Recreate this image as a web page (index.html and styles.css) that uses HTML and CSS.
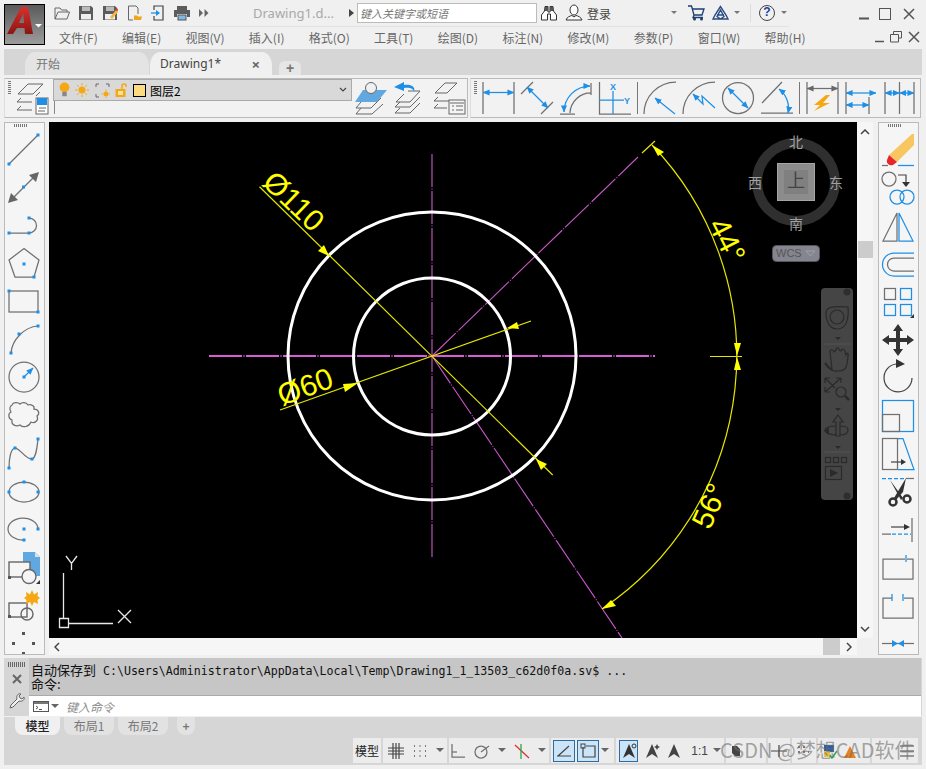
FILE: index.html
```html
<!DOCTYPE html>
<html lang="zh">
<head>
<meta charset="utf-8">
<title>AutoCAD</title>
<link rel="stylesheet" href="styles.css">
</head>
<body>
<svg class="defs" width="0" height="0">
  <defs>
    <marker id="ab" viewBox="0 0 8 8" refX="7.5" refY="4" markerWidth="7" markerHeight="7" markerUnits="userSpaceOnUse" orient="auto-start-reverse"><path d="M0 .5L8 4L0 7.5Z" fill="#1e8fe6"/></marker>
    <marker id="ag" viewBox="0 0 8 8" refX="7.5" refY="4" markerWidth="7" markerHeight="7" markerUnits="userSpaceOnUse" orient="auto-start-reverse"><path d="M0 .5L8 4L0 7.5Z" fill="#666"/></marker>
    <linearGradient id="logo" x1="0" y1="0" x2="0" y2="1"><stop offset="0" stop-color="#d9302c"/><stop offset="1" stop-color="#8c1512"/></linearGradient>
  </defs>
</svg>

<header class="titlebar">
  <div class="appbtn">
    <svg width="38" height="38" viewBox="0 0 38 38"><path d="M1 28L15 1H22L27 28H19L18.500 22H11L7 28ZM13 17H18L17.300 7Z" fill="url(#logo)" fill-rule="evenodd"/><path d="M29 18H36L32.500 21.500Z" fill="#fff"/></svg>
  </div>
  <div class="titlecol">
    <div class="row1">
      <div class="qat">
        <svg class="q" viewBox="0 0 16 16"><path class="gs1" d="M1 14V3H6L7.500 5H13V7M1 14L4 7H15.500L13 14Z"/></svg>
        <svg class="q" viewBox="0 0 16 16"><path class="gf" d="M1 1H13L15 3V15H1Z"/><rect x="4" y="1.500" width="8" height="4.500" fill="#bbb"/><rect x="3" y="9" width="10" height="5.500" fill="#f0f0f0"/></svg>
        <svg class="q" viewBox="0 0 16 16"><path class="gf" d="M1 1H13L15 3V15H1Z"/><rect x="4" y="1.500" width="8" height="4.500" fill="#bbb"/><rect x="3" y="9" width="10" height="5.500" fill="#f0f0f0"/><path d="M8 12L14 5L16 7L10 14Z" fill="#f5b342"/><path d="M13.500 5L15 3L16 4.500L15.500 6.500Z" fill="#e33"/></svg>
        <svg class="q" viewBox="0 0 16 16"><path class="gs1" d="M2.500 15V1H10L12 3V9M2.500 15H7"/><path d="M8 15V10.500H11L12 11.500H16L15 15Z" fill="#f0a31e"/></svg>
        <svg class="q" viewBox="0 0 16 16"><path class="ds" d="M4 5V1H13V15H4V11"/><path d="M1 8H7" class="bs"/><path d="M6 5L10 8L6 11Z" fill="#1e8fe6"/></svg>
        <svg class="q" viewBox="0 0 16 16"><path class="gf" d="M3 1H13V5H3ZM0 5H16V12H13V9H3V12H0Z"/><rect x="4" y="10" width="8" height="5" fill="#7fb9e6" stroke="#555"/></svg>
        <svg class="dbl" viewBox="0 0 10 10"><path d="M0 1L4 5L0 9ZM5.500 1L9.500 5L5.500 9Z" fill="#666"/></svg>
      </div>
      <span class="doctitle">Drawing1.d...</span>
      <svg class="tri" viewBox="0 0 6 10"><path d="M0 1L5 5L0 9Z" fill="#444"/></svg>
      <div class="search">键入关键字或短语</div>
      <svg class="icon-bin" viewBox="0 0 16 16"><path d="M4 1.500H7V7H9V1.500H12L12.500 6L15.500 10V15H9.500V9H6.500V15H.5V10L3.500 6Z" fill="#fff" stroke="#333"/><rect x="4" y="2" width="3" height="4" fill="#555"/><rect x="9" y="2" width="3" height="4" fill="#555"/></svg>
      <svg class="icon-user" viewBox="0 0 18 18"><ellipse cx="9" cy="6" rx="4" ry="5" fill="#fff" stroke="#333"/><path d="M1 16C2 13 5 12 7 11.500L9 13L11 11.500C13 12 16 13 17 16Z" fill="#fff" stroke="#333"/></svg>
      <span class="login">登录</span>
      <svg class="car c-login" viewBox="0 0 6 4"><path d="M0 0H6L3 3Z" fill="#777"/></svg>
      <svg class="icon-cart" viewBox="0 0 17 16"><path d="M0 1H3.500L6 10H14L16 4H4.500M6 10L5 12.500H15" fill="none" stroke="#1d3f70" stroke-width="1.300"/><circle cx="6.500" cy="14" r="1.500" fill="#1d3f70"/><circle cx="13.500" cy="14" r="1.500" fill="#1d3f70"/></svg>
      <svg class="icon-a360" viewBox="0 0 17 16"><path d="M8.500 1.500L3 10L1 14H16L14 10ZM5 10H12M8.500 5L5 11.500L8.500 14L12 11.500Z" fill="none" stroke="#2a4a83" stroke-width="1.400"/></svg>
      <svg class="car c-a" viewBox="0 0 6 4"><path d="M0 0H6L3 3Z" fill="#777"/></svg>
      <span class="vsep"></span>
      <span class="help">?</span>
      <svg class="car c-h" viewBox="0 0 6 4"><path d="M0 0H6L3 3Z" fill="#777"/></svg>
      <div class="winctl">
        <svg class="w-min" viewBox="0 0 12 12"><path d="M1 10.500H11" stroke="#555" stroke-width="2"/></svg>
        <svg class="w-max" viewBox="0 0 12 12"><rect x=".5" y=".5" width="11" height="11" fill="none" stroke="#555"/></svg>
        <svg class="w-cls" viewBox="0 0 12 12"><path d="M1 1L11 11M11 1L1 11" stroke="#555" stroke-width="1.500"/></svg>
      </div>
    </div>
    <div class="row2">
      <nav class="menu">
        <span>文件(F)</span><span>编辑(E)</span><span>视图(V)</span><span>插入(I)</span><span>格式(O)</span><span>工具(T)</span><span>绘图(D)</span><span>标注(N)</span><span>修改(M)</span><span>参数(P)</span><span>窗口(W)</span><span>帮助(H)</span>
      </nav>
      <div class="docctl">
        <svg viewBox="0 0 12 12"><path d="M3 10.500H12" stroke="#555" stroke-width="1.500"/></svg>
        <svg viewBox="0 0 12 12"><path d="M3.500 3V.5H11.500V7H9M.5 3.500H8.500V11H.5Z" fill="none" stroke="#555"/></svg>
        <svg viewBox="0 0 12 12"><path d="M1 1L11 11M11 1L1 11" stroke="#555" stroke-width="1.500"/></svg>
      </div>
    </div>
  </div>
</header>

<div class="tabstrip">
  <div class="tab tab-start"><span>开始</span></div>
  <div class="tab tab-active"><span>Drawing1*</span><b>×</b></div>
  <div class="tab tab-plus">+</div>
</div>

<section class="topbars">
  <div class="panel p1">
    <i class="grip-v"></i>
    <svg class="i first" viewBox="0 0 32 32"><path class="gs1" d="M2 12L12 2H27L17 12ZM5 16L1 20H16M5 24L1 28H16"/><path class="gs1" d="M20 14L24 10"/><rect x="20" y="16" width="12" height="16" fill="#fff" stroke="#666"/><rect x="21" y="16" width="10" height="7" fill="#1e8fe6"/><path d="M23 26H30M22 29H29" stroke="#666"/></svg>
    <div class="layerbox">
      <div class="combo">
        <svg class="li" viewBox="0 0 12 18"><circle cx="6" cy="6" r="5.500" fill="#f5a814"/><rect x="3.500" y="11" width="5" height="5" fill="#888"/></svg>
        <svg class="li2" viewBox="0 0 14 14"><circle cx="7" cy="7" r="3.500" fill="#f5a814"/><path d="M7 0V2.500M7 11.500V14M0 7H2.500M11.500 7H14M2 2L3.800 3.800M10.200 10.200L12 12M2 12L3.800 10.200M10.200 3.800L12 2" stroke="#f5a814"/></svg>
        <svg class="li3" viewBox="0 0 15 15"><path d="M1 4V1H4M11 1H14V4M1 11V14H4" fill="none" stroke="#666"/><circle cx="11" cy="11" r="2.500" fill="#f5a814"/><path d="M11 6.500V8M11 14V15.500M6.500 11H8M14 11H15.500" stroke="#f5a814"/></svg>
        <svg class="li4" viewBox="0 0 12 14"><rect x=".5" y="6" width="10" height="8" fill="#f5a814"/><rect x="3" y="8" width="5" height="4" fill="#fde1a0"/><path d="M7 6V2.500C7 .5 11 .5 11 2.500V4" fill="none" stroke="#f5a814" stroke-width="1.500"/></svg>
        <span class="swatch"></span>
        <span class="layername">图层2</span>
        <svg class="chev" viewBox="0 0 8 6"><path d="M1 1L4 4L7 1" fill="none" stroke="#444" stroke-width="1.200"/></svg>
      </div>
      <div class="belowcombo"></div>
    </div>
    <svg class="i" viewBox="0 0 32 32"><path class="gs1" d="M6 20L1 26H16L26 16M6 26L1 32H17L28 22"/><path d="M0 20L8 8H32L22 20Z" fill="#62a8e0"/><circle cx="16" cy="6" r="5.500" fill="#f0f0f0" stroke="#666"/></svg>
    <svg class="i" viewBox="0 0 32 32"><path class="gs1" d="M14 9H26L16 20H2L10 12M6 20L1 25H16L26 15M6 26L1 31H16L26 21"/><path d="M20 10C20 6 14 5 10 6V9L0 5L10 0V3C16 2 22 4 20 10Z" fill="#1e8fe6"/></svg>
    <svg class="i" viewBox="0 0 32 32"><path class="gs1" d="M2 11L12 1H24L14 11ZM5 15L1 19H16M5 22L1 26H14"/><rect x="16" y="18" width="16" height="14" fill="#f4f4f4" stroke="#666"/><path d="M17 21H31M19 24H21M23 24H30M19 28H21M23 28H30" stroke="#666"/></svg>
  </div>
  <div class="panel p2">
    <i class="grip-v"></i>
    <svg class="i first" viewBox="0 0 32 32"><path class="gs" d="M1 0V32M32 0V32"/><path class="bs" d="M1 10.500H32" marker-start="url(#ab)" marker-end="url(#ab)"/></svg>
    <svg class="i" viewBox="0 0 32 32"><path class="gs" d="M0 12L12 0M20 32L32 20"/><path class="bs" d="M6 5L27 26" marker-start="url(#ab)" marker-end="url(#ab)"/></svg>
    <svg class="i" viewBox="0 0 32 32"><path class="gs" d="M10 31A21 21 0 0 1 31 11M0 32H15M31 1V13"/><path class="bs" d="M4 30A26 26 0 0 1 30 4" marker-start="url(#ab)" marker-end="url(#ab)"/></svg>
    <svg class="i" viewBox="0 0 32 32"><path class="gs" d="M.5 0V32H32"/><path class="bs" d="M14 9V32M0 18H25"/><text x="14" y="8" class="axt" text-anchor="middle">X</text><text x="28" y="22" class="axt" text-anchor="middle">Y</text></svg>
    <i class="sep"></i>
    <svg class="i" viewBox="0 0 32 32"><path class="gs" d="M0 32A32 32 0 0 1 32 0"/><path class="bs" d="M11 16L31 32" marker-start="url(#ab)"/></svg>
    <svg class="i" viewBox="0 0 32 32"><path class="gs" d="M0 32A32 32 0 0 1 32 0"/><path class="bs" d="M32 26L19 14L20 22L10 12" marker-end="url(#ab)"/></svg>
    <svg class="i" viewBox="0 0 32 32"><circle class="gs" cx="16" cy="16" r="15.500"/><path class="bs" d="M6 6L26 26" marker-start="url(#ab)" marker-end="url(#ab)"/></svg>
    <svg class="i" viewBox="0 0 32 32"><path class="gs" d="M0 31H32M1 21L21 0"/><path class="bs" d="M18 7A24 24 0 0 1 27 31" marker-end="url(#ab)" marker-start="url(#ab)"/></svg>
    <i class="sep"></i>
    <svg class="i" viewBox="0 0 32 32"><path class="gs" d="M1 0V32M32 0V32"/><path class="gs" d="M1 6.500H32" marker-start="url(#ag)" marker-end="url(#ag)"/><path d="M20 13L8 23H14L8 29L24 21H17L24 13Z" fill="#f5a814"/></svg>
    <svg class="i" viewBox="0 0 32 32"><path class="gs" d="M1 0V32M24 15V32"/><path class="bs" d="M1 11H31" marker-start="url(#ab)" marker-end="url(#ab)"/><path class="bs" d="M1 23H24" marker-start="url(#ab)" marker-end="url(#ab)"/></svg>
    <svg class="i" viewBox="0 0 32 32"><path class="gs" d="M1 0V32M15.500 0V32M30 0V32"/><path class="bs" d="M1 11H15.500" marker-start="url(#ab)" marker-end="url(#ab)"/><path class="bs" d="M15.500 11H30" marker-start="url(#ab)" marker-end="url(#ab)"/></svg>
  </div>
</section>

<main class="workspace">
  <aside class="vtool">
    <i class="grip-h"></i>
    <svg class="i" viewBox="0 0 32 32"><path class="gs" d="M1 30L30 1"/><rect class="dot" x="-.5" y="28.500" width="3" height="3"/><rect class="dot" x="28.500" y="-.5" width="3" height="3"/></svg>
    <svg class="i" viewBox="0 0 32 32"><path class="gs" d="M3 28L28 3"/><path d="M0 31L3 21L10 28ZM31 0L28 10L21 3Z" fill="#666"/><rect class="dot" x="14" y="13.500" width="3" height="3"/></svg>
    <svg class="i" viewBox="0 0 32 32"><path class="gs" d="M1 23H21A7.500 7.500 0 0 0 21 8"/><rect class="dot" x="-.5" y="21.500" width="3" height="3"/><rect class="dot" x="19.500" y="21.500" width="3" height="3"/><rect class="dot" x="19.500" y="6.500" width="3" height="3"/></svg>
    <svg class="i" viewBox="0 0 32 32"><path class="gs" d="M16 .5L31 12L26 29H7L1 12Z"/><rect class="dot" x="14.500" y="14.500" width="3" height="3"/><rect class="dot" x="24.500" y="27.500" width="3" height="3"/></svg>
    <svg class="i" viewBox="0 0 32 32"><rect class="gs" x="1" y="5" width="29" height="21"/><rect class="dot" x="-.5" y="3.500" width="3" height="3"/><rect class="dot" x="28.500" y="24.500" width="3" height="3"/></svg>
    <svg class="i" viewBox="0 0 32 32"><path class="gs" d="M3 29C4 16 16 3 30 2"/><rect class="dot" x="1.500" y="27.500" width="3" height="3"/><rect class="dot" x="9.500" y="8.500" width="3" height="3"/><rect class="dot" x="28.500" y=".5" width="3" height="3"/></svg>
    <svg class="i" viewBox="0 0 32 32"><circle class="gs" cx="16" cy="15" r="15"/><path class="bs" d="M16 15L25 6" marker-end="url(#ab)"/><rect class="dot" x="14.500" y="13.500" width="3" height="3"/></svg>
    <svg class="i" viewBox="0 0 32 32"><path class="gs" d="M4 5C5 2 10 2 12 4C14 2 18 2 20 5C23 4 27 6 26 9C31 9 32 14 29 16C31 20 27 24 23 22C21 27 15 28 12 25C8 27 3 25 4 20C0 19 0 13 3 12C1 9 2 6 4 5Z"/></svg>
    <svg class="i" viewBox="0 0 32 32"><path class="gs" d="M1 30C1 20 3 10 7 10C12 10 18 22 24 21C28 20 29 10 30 1"/><rect class="dot" x="-.5" y="28.500" width="3" height="3"/><rect class="dot" x="5.500" y="8.500" width="3" height="3"/><rect class="dot" x="22.500" y="19.500" width="3" height="3"/><rect class="dot" x="28.500" y="-.5" width="3" height="3"/></svg>
    <svg class="i" viewBox="0 0 32 32"><ellipse class="gs" cx="16" cy="16" rx="15" ry="10"/><rect class="dot" x="14.500" y="4.500" width="3" height="3"/><rect class="dot" x="-.5" y="14.500" width="3" height="3"/><rect class="dot" x="28.500" y="14.500" width="3" height="3"/></svg>
    <svg class="i" viewBox="0 0 32 32"><path class="gs" d="M30 15A15 11 0 1 0 16 26"/><rect class="dot" x="14.500" y="13.500" width="3" height="3"/><rect class="dot" x="28.500" y="13.500" width="3" height="3"/><rect class="dot" x="14.500" y="24.500" width="3" height="3"/></svg>
    <svg class="i" viewBox="0 0 32 32"><path d="M15 0H27L32 5V24H15Z" fill="#62a8e0"/><path d="M27 0L32 5H27Z" fill="#cfe4f5"/><rect x="1" y="10" width="21" height="15" fill="#f5f5f5" stroke="#666" stroke-width="1.400"/><rect x="0" y="24" width="3" height="3" fill="#555"/><circle cx="21" cy="24.500" r="7" fill="#f5f5f5" stroke="#666" stroke-width="1.400"/><path d="M32 28V32H28Z" fill="#333"/></svg>
    <svg class="i" viewBox="0 0 32 32"><rect x="1" y="13" width="18" height="14" fill="none" stroke="#666" stroke-width="1.400"/><rect x="0" y="25" width="3" height="3" fill="#555"/><circle cx="19" cy="24" r="6" fill="none" stroke="#666" stroke-width="1.400"/><path d="M24 0L26 4.500L30 2L29.500 6L32 8L29.500 10L30 14L26 12L24 16L22 12L18 14L18.500 10L16 8L18.500 6L18 2L22 4.500Z" fill="#f5a814"/></svg>
    <svg class="i" viewBox="0 0 32 32"><rect class="dk" x="14" y="4" width="3" height="3"/><rect class="dk" x="4" y="14" width="3" height="3"/><rect class="dk" x="24" y="14" width="3" height="3"/><rect class="dk" x="14" y="24" width="3" height="3"/></svg>
  </aside>

  <div class="center">
    <div class="center-top">
      <div class="canvas">
        <svg width="808" height="516" viewBox="49 122 808 516">
          <rect x="49" y="122" width="808" height="516" fill="#000"/>
          <g class="ctr">
            <path class="ctr-h" d="M209 356H655"/>
            <path d="M432 154V557"/>
            <path d="M432 356L638 157"/>
            <path d="M432 356L622 638"/>
          </g>
          <g class="circles">
            <circle cx="432" cy="356" r="144"/>
            <circle cx="432" cy="356.500" r="78.500"/>
          </g>
          <g class="dim">
            <path d="M259.500 186.700L552.700 475"/>
            <path d="M280 410L531 321"/>
            <path d="M652 145A305 305 0 0 1 602 609"/>
            <path d="M642 153L655 141M710 356.500H742"/>
          </g>
          <g class="arrow">
            <path d="M329 256L318 251L324 245Z"/>
            <path d="M536 459L547 464L541 470Z"/>
            <path d="M358 383L343 384L345 392Z"/>
            <path d="M507 328L517 322L519 329Z"/>
            <path d="M652 145L664 152L658 156Z"/>
            <path d="M737 356L734 343H741Z"/>
            <path d="M737 357L734 370H741Z"/>
            <path d="M602 609L611 600L616 606Z"/>
          </g>
          <g class="dimtext">
            <text x="261" y="184" transform="rotate(44 261 184)">Ø110</text>
            <text x="282" y="406" transform="rotate(-20 282 406)">Ø60</text>
            <text x="718" y="245" text-anchor="middle" transform="rotate(63 718 245)">44°</text>
            <text x="719" y="510" text-anchor="middle" transform="rotate(-66 719 510)">56°</text>
          </g>
          <g class="ucs">
            <path d="M63.500 573V618M68 623.500H113M59.500 618.500H68.500V627.500H59.500ZM66 556L71.500 563.500L77 556M71.500 563.500V570M118 610L131 623M131 610L118 623"/>
          </g>
          <g class="cube">
            <circle cx="796" cy="182" r="39" class="ring"/>
            <rect x="777.500" y="163.500" width="37" height="37" class="face"/>
            <rect x="784" y="170" width="24" height="24" class="face2"/>
            <text x="796" y="187" class="cube-top">上</text>
            <text x="796" y="147" class="cube-l">北</text>
            <text x="796" y="229" class="cube-l">南</text>
            <text x="755" y="188" class="cube-l">西</text>
            <text x="836" y="188" class="cube-l">东</text>
            <rect x="772.500" y="245.500" width="47" height="16" rx="4" class="wcs"/>
            <text x="776" y="257" class="wcs-t">WCS</text>
            <path d="M806 251H815L810.500 256Z" class="wcs-c"/>
          </g>
          <g class="navbar">
            <rect x="821" y="288" width="32" height="212" rx="4" class="nav-bg"/>
            <circle cx="847" cy="292" r="3.500" class="nav-f"/>
            <circle cx="847" cy="496" r="3.500" class="nav-f"/>
            <path class="nav" d="M826 313C826 307 832 306 848 307C849 320 846 329 837 329C830 329 826 322 826 313Z"/>
            <circle class="nav" cx="837" cy="317" r="7"/>
            <path class="nav-fl" d="M835 337H841L838 340ZM835 408H841L838 411ZM835 446H841L838 449Z"/>
            <path class="nav-ln" d="M824 344H850M824 452H850"/>
            <path class="nav" d="M826 363C829 368 832 369 832 369L830 352C830 349 833 349 834 352L836 350C836 347 839 347 839 350L841 351C842 348 845 349 845 352L846 355C847 352 849 353 848 356C847 366 847 371 838 371C831 372 827 367 825 364Z"/>
            <path class="nav" d="M825 378L835 388M841 378L825 392M825 378V383M825 378H830M841 378V383M841 378H836M825 392V387M825 392H830"/>
            <circle class="nav" cx="841" cy="392" r="5"/>
            <path class="nav-th" d="M845 396L849 400"/>
            <path class="nav" d="M838 415L843 422H840V436H836V422H833ZM836 426C829 426 825 428 825 430C825 433 831 435 836 435M840 426C846 426 848 428 848 430C848 433 845 435 840 435"/>
            <path class="nav-fl" d="M829 427V435L824 431Z"/>
            <rect class="nav" x="825.500" y="457.500" width="5" height="5"/>
            <rect class="nav" x="833.500" y="457.500" width="5" height="5"/>
            <rect class="nav" x="841.500" y="457.500" width="5" height="5"/>
            <rect class="nav" x="825.500" y="466.500" width="16" height="13"/>
            <path class="nav-fl" d="M830 469L838 473L830 477Z"/>
          </g>
        </svg>
      </div>
      <div class="vscroll">
        <svg class="sc-a" viewBox="0 0 10 6"><path d="M1 5L5 1L9 5" fill="none" stroke="#444" stroke-width="1.500"/></svg>
        <span class="sc-thumb"></span>
        <svg class="sc-a" viewBox="0 0 10 6"><path d="M1 1L5 5L9 1" fill="none" stroke="#444" stroke-width="1.500"/></svg>
      </div>
    </div>
    <div class="hscroll">
      <svg class="sc-h" viewBox="0 0 6 10"><path d="M5 1L1 5L5 9" fill="none" stroke="#444" stroke-width="1.500"/></svg>
      <span class="sc-hthumb"></span>
      <svg class="sc-h" viewBox="0 0 6 10"><path d="M1 1L5 5L1 9" fill="none" stroke="#444" stroke-width="1.500"/></svg>
    </div>
  </div>

  <aside class="vtool">
    <i class="grip-h"></i>
    <svg class="i" viewBox="0 0 32 32"><path d="M32 0V11L15 28L7 21L30 0Z" fill="#f8c660"/><path d="M7 21L15 28L11 31C8 32 4 30 5 26Z" fill="#e8252b"/><path class="gs" d="M0 31.500H6"/><path class="bs" d="M16 31.500H32"/></svg>
    <svg class="i" viewBox="0 0 32 32"><circle class="gs" cx="7" cy="7" r="7"/><path class="ds" d="M16 3H24V11"/><path d="M20 10H28L24 15Z" fill="#333"/><circle class="bs" cx="15" cy="25" r="7"/><circle class="bs" cx="25" cy="25" r="7"/></svg>
    <svg class="i" viewBox="0 0 32 32"><path class="gs" d="M1 31H15V3Z"/><path class="bs" d="M17 3V31H31Z"/></svg>
    <svg class="i" viewBox="0 0 32 32"><path class="bs" d="M32 5H12A11.500 11.500 0 0 0 12 28H32"/><path class="gs" d="M32 10H12A6.500 6.500 0 0 0 12 23H32"/></svg>
    <svg class="i" viewBox="0 0 32 32"><rect class="gs" x="2.500" y="2.500" width="11" height="11"/><rect class="bs" x="18.500" y="2.500" width="11" height="11"/><rect class="bs" x="2.500" y="18.500" width="11" height="11"/><rect class="bs" x="18.500" y="18.500" width="11" height="11"/><path d="M32 28V32H28Z" fill="#333"/></svg>
    <svg class="i" viewBox="0 0 32 32"><path d="M16 0L21 7H18V14H25V11L32 16L25 21V18H18V25H21L16 32L11 25H14V18H7V21L0 16L7 11V14H14V7H11Z" fill="#333"/></svg>
    <svg class="i" viewBox="0 0 32 32"><path class="ds" d="M14 2A14 14 0 1 0 30 16"/><path d="M14 -3L23 2L14 6Z" fill="#333"/></svg>
    <svg class="i" viewBox="0 0 32 32"><rect class="bs" x=".5" y=".5" width="31" height="31"/><rect class="gs" x=".5" y="14.500" width="17" height="17"/></svg>
    <svg class="i" viewBox="0 0 32 32"><rect class="gs" x=".5" y=".5" width="15" height="31"/><path class="bs" d="M16 .5H21L32 31.500H16"/><path class="ds" d="M9 24H20"/><path d="M19 21L24 24L19 27Z" fill="#333"/></svg>
    <svg class="i" viewBox="0 0 32 32"><path class="bd" d="M0 2.500H22"/><path class="gs" d="M24 2.500H32"/><path d="M8 4L21 22L19 24ZM24 2L21 16L14 24L12 22Z" fill="#333"/><circle cx="11" cy="26" r="3.500" fill="none" stroke="#333" stroke-width="2.500"/><circle cx="25" cy="23" r="3.500" fill="none" stroke="#333" stroke-width="2.500"/></svg>
    <svg class="i" viewBox="0 0 32 32"><path class="gs" d="M30 4V28M0 20H9"/><path class="bd" d="M10 20H29"/><path class="ds" d="M9 13H22"/><path d="M22 10L28 13L22 16Z" fill="#333"/></svg>
    <svg class="i" viewBox="0 0 32 32"><path class="gs" d="M25 7H31V27H1V7H23"/><path class="bs" d="M24 3V10"/></svg>
    <svg class="i" viewBox="0 0 32 32"><path class="gs" d="M10 8H1V28H31V8H22"/><path class="bs" d="M10 4V11M21 4V11"/></svg>
    <svg class="i" viewBox="0 0 32 32"><path class="gs" d="M0 15.500H32"/><path d="M10 12L16 15.500L22 12V19L16 15.500L10 19Z" fill="#1e8fe6"/></svg>
  </aside>
</main>

<section class="command">
  <div class="cmd-side">
    <i class="cmd-grip"></i>
    <svg class="cmd-x" viewBox="0 0 10 10"><path d="M1 1L9 9M9 1L1 9" stroke="#666" stroke-width="2"/></svg>
    <svg class="cmd-w" viewBox="0 0 16 16"><path d="M1 15L2 12L8 6C7 3 9 0 12 1L10 3L11 5L13 6L15 4C16 7 13 9 10 8L4 14Z" fill="#f0f0f0" stroke="#666"/></svg>
  </div>
  <div class="cmd-main">
    <div class="history">
      <div class="h1">自动保存到 <span class="mono">C:\Users\Administrator\AppData\Local\Temp\Drawing1_1_13503_c62d0f0a.sv$ ...</span></div>
      <div class="h2">命令:</div>
    </div>
    <div class="cmdline">
      <svg class="prompt" viewBox="0 0 16 11"><rect x=".5" y=".5" width="15" height="10" fill="#fff" stroke="#555"/><path d="M1 1H15V3H1Z" fill="#777"/><path d="M3 5L5 6.500L3 8M6 8.500H9" fill="none" stroke="#555"/></svg>
      <svg class="prompt-c" viewBox="0 0 8 5"><path d="M0 0H8L4 4Z" fill="#666"/></svg>
      <span class="placeholder">键入命令</span>
    </div>
  </div>
</section>

<footer class="bottom">
  <div class="ltabs">
    <span class="lt lt-on">模型</span>
    <span class="lt">布局1</span>
    <span class="lt">布局2</span>
    <span class="lt lt-plus">+</span>
  </div>
  <div class="status">
    <div class="sg w1"><span class="model">模型</span></div>
    <div class="sg w2">
      <svg class="s" viewBox="0 0 16 16"><path class="ds" d="M0 5H16M0 8H16M0 11H16M5 0V16M8 0V16M11 0V16"/></svg>
      <svg class="s" viewBox="0 0 16 16"><path class="dots" d="M2 3H3M7.500 3H8.500M13 3H14M2 8H3M7.500 8H8.500M13 8H14M2 13H3M7.500 13H8.500M13 13H14"/></svg>
      <svg class="sc" viewBox="0 0 8 5"><path d="M0 0H8L4 4Z" fill="#666"/></svg>
    </div>
    <div class="sg w3">
      <svg class="s" viewBox="0 0 16 16"><path class="gs" d="M2 1V14H15"/><path d="M2 9H7" class="gs"/></svg>
      <svg class="s" viewBox="0 0 16 16"><circle class="gs" cx="7" cy="9" r="6"/><path class="gs" d="M7 9L15 3"/></svg>
      <svg class="sc" viewBox="0 0 8 5"><path d="M0 0H8L4 4Z" fill="#666"/></svg>
      <svg class="s" viewBox="0 0 16 16"><path d="M1 2L15 15" stroke="#d33" stroke-width="1.300"/><path d="M7 1V16" stroke="#2aa84a" stroke-width="1.300"/></svg>
      <svg class="sc" viewBox="0 0 8 5"><path d="M0 0H8L4 4Z" fill="#666"/></svg>
    </div>
    <div class="sg w4">
      <span class="on"><svg class="s" viewBox="0 0 16 16"><path class="ds" d="M1 13H15M2 13L13 3"/></svg></span>
      <span class="on"><svg class="s" viewBox="0 0 16 16"><path class="ds" d="M3 4V14H15V3H6"/><rect x="1" y="1" width="4" height="4" fill="none" stroke="#444"/></svg></span>
      <svg class="sc" viewBox="0 0 8 5"><path d="M0 0H8L4 4Z" fill="#666"/></svg>
    </div>
    <div class="sg w5">
      <span class="on"><svg class="s" viewBox="0 0 16 16"><path d="M8 1L14 15L8 11L2 15Z" fill="#333"/><circle cx="13" cy="3" r="2" fill="none" stroke="#333"/></svg></span>
      <svg class="s" viewBox="0 0 16 16"><path d="M8 1L14 15L8 11L2 15Z" fill="#444"/><path d="M13 1L14 3L16 4L14 5L13 7L12 5L10 4L12 3Z" fill="#444"/></svg>
      <svg class="s" viewBox="0 0 16 16"><path d="M8 1L14 15L8 11L2 15Z" fill="#444"/></svg>
      <span class="scale">1:1</span>
      <svg class="sc" viewBox="0 0 8 5"><path d="M0 0H8L4 4Z" fill="#666"/></svg>
    </div>
    <div class="sg w6">
      <svg class="s" viewBox="0 0 16 16"><path d="M3 3H8L11 6V13H6L3 10Z" fill="#444"/></svg>
    </div>
    <div class="sg w7"><svg class="s" viewBox="0 0 16 16"><path class="ds" d="M0 8H16M8 2V14"/></svg></div>
    <div class="sg w8"><svg class="s" viewBox="0 0 16 16"><path class="dots" d="M3 4H5M8 4H10M3 9H5M8 9H10M13 9H14"/></svg></div>
    <div class="sg w9">
      <svg class="s" viewBox="0 0 16 16"><path d="M3 2H13V9H3Z" fill="#2a5fa8"/><path d="M3 8H9V14H3Z" fill="#f0c040"/><path d="M9 12L11 15L16 8" fill="none" stroke="#2aa84a" stroke-width="1.500"/></svg>
      <svg class="s" viewBox="0 0 16 16"><path d="M8 3L14 15H2Z" fill="#e8801c"/></svg>
    </div>
    <div class="sg w10">
      <svg class="s" viewBox="0 0 16 16"><path class="ds" d="M1 3H15M1 8H15M1 13H15"/></svg>
    </div>
    <div class="watermark">CSDN @梦想CAD软件</div>
  </div>
</footer>
</body>
</html>
```

FILE: styles.css
```css
* { box-sizing: border-box; }
html, body { margin: 0; padding: 0; }
body {
  width: 926px;
  height: 769px;
  overflow: hidden;
  background: #f0f0f0;
  font-family: "Noto Sans CJK SC", "Liberation Sans", sans-serif;
  font-size: 12px;
  color: #555;
  display: flex;
  flex-direction: column;
}
svg { display: block; flex: none; overflow: hidden; }
i { display: block; flex: none; }
.defs { position: absolute; }

/* shared icon strokes */
.gs { fill: none; stroke: #707070; stroke-width: 1.25; }
.gs1 { fill: none; stroke: #666; stroke-width: 1; }
.bs { fill: none; stroke: #1e8fe6; stroke-width: 1.25; }
.bd { fill: none; stroke: #1e8fe6; stroke-width: 1.25; stroke-dasharray: 4 2; }
.ds { fill: none; stroke: #444; stroke-width: 1.2; }
.gf { fill: #5c5c5c; }
.dot { fill: #1e8fe6; }
.dk { fill: #555; }
.dots { fill: none; stroke: #555; stroke-width: 1.6; }
.axt { font: bold 9px "Liberation Sans", sans-serif; fill: #1e8fe6; }
.i { width: 32px; height: 32px; overflow: visible; }

/* title bar */
.titlebar { height: 48px; display: flex; padding: 4px 0 0 4px; }
.appbtn {
  width: 41px; height: 41px; border: 1px solid #000;
  background: linear-gradient(#5a5a5a, #9c9c9c);
  padding: 1px;
}
.titlecol { flex: 1; margin-top: -4px; display: flex; flex-direction: column; }
.row1 { height: 26px; display: flex; align-items: center; padding-left: 9px; position: relative; }
.qat { display: flex; align-items: center; gap: 8px; width: 164px; }
.q { width: 16px; height: 16px; }
.dbl { width: 10px; height: 10px; margin-left: 1px; }
.doctitle { width: 95px; margin-left: 35px; font-size: 13px; color: #a8a8a8; font-family: "Noto Sans", sans-serif; white-space: nowrap; }
.tri { width: 6px; height: 10px; margin-left: 1px; }
.search {
  width: 180px; height: 20px; margin-left: 2px; padding-left: 2px; background: #fff; border: 1px solid #bbb;
  font-style: italic; font-size: 11px; line-height: 18px; color: #777;
}
.icon-bin { width: 16px; height: 16px; margin-left: 4px; }
.icon-user { width: 18px; height: 18px; margin-left: 8px; }
.login { margin-left: 4px; width: 24px; color: #444; }
.car { width: 6px; height: 4px; }
.c-login { margin-left: 60px; }
.icon-cart { width: 17px; height: 16px; margin-left: 11px; }
.icon-a360 { width: 17px; height: 16px; margin-left: 7px; }
.c-a { margin-left: 5px; }
.vsep { width: 1px; height: 18px; background: #ddd; margin-left: 10px; }
.help {
  width: 16px; height: 16px; margin-left: 8px; border-radius: 50%; border: 1.5px solid #444;
  font: bold 12px/13px "Liberation Sans", sans-serif; color: #1d3f9a; text-align: center;
}
.c-h { margin-left: 6px; }
.winctl { display: flex; gap: 10px; align-items: center; position: absolute; left: 813px; top: 8px; }
.w-min { width: 12px; height: 12px; }
.w-max { width: 12px; height: 12px; margin-left: -1px; }
.w-cls { width: 12px; height: 12px; margin-left: 2px; }
.row2 {
  height: 22px; display: flex; align-items: center; padding-left: 14px; width: 875px;
  background: linear-gradient(#e2e2e2, #e2e2e2) no-repeat 0 0 / 744px 1px;
}
.menu { display: flex; gap: 24.300px; color: #666; white-space: nowrap; }
.docctl { display: flex; gap: 6px; margin-left: auto; }
.docctl svg { width: 12px; height: 12px; }

/* tabs */
.tabstrip {
  height: 26px; margin: 1px 4px 0; background: #d6d6d6;
  display: flex; align-items: flex-end; padding-left: 21px;
}
.tab { height: 23px; display: flex; align-items: center; font-size: 12px; }
.tab-start {
  width: 124px; background: #e4e4e4; padding-left: 11px; color: #777;
  border-radius: 10px 10px 0 0 / 14px 14px 0 0;
}
.tab-active {
  width: 122px; margin-left: 1px; background: #f0f0f0; color: #444; padding-left: 10px;
  border-radius: 10px 10px 0 0 / 14px 14px 0 0; justify-content: space-between; padding-right: 12px;
  font-family: "Noto Sans", sans-serif;
}
.tab-active b { font-size: 15px; color: #666; }
.tab-plus {
  width: 22px; height: 14px; margin-left: 7px; background: #e6e6e6; border-radius: 6px 6px 0 0;
  justify-content: center; font: bold 14px "Liberation Sans", sans-serif; color: #777;
}

/* toolbars */
.topbars { height: 40px; margin: 3px 5px 0 4px; display: flex; gap: 2px; }
.panel { height: 40px; border: 1px solid #bbb; border-left-color: #ddd; display: flex; align-items: center; background: #f2f2f2; }
.p1 { width: 464px; padding-left: 3px; gap: 7px; }
.p2 { width: 451px; padding-left: 3px; gap: 7px; }
.grip-v { width: 3px; height: 14px; margin-top: -20px; background: repeating-linear-gradient(#777 0 1px, transparent 1px 2px); }
.p1 .first { margin-left: -2px; }
.p2 .first { margin-left: -2px; }
.layerbox { width: 299px; margin: 0 -4px 0 -2px; align-self: stretch; display: flex; flex-direction: column; }
.combo {
  height: 22px; background: #d9d9d9; border: 1px solid #aaa; display: flex; align-items: center; padding-left: 5px;
}
.li { width: 11px; height: 16px; }
.li2 { width: 14px; height: 14px; margin-left: 5px; }
.li3 { width: 15px; height: 15px; margin-left: 6px; }
.li4 { width: 12px; height: 14px; margin-left: 5px; }
.swatch { width: 13px; height: 13px; margin-left: 6px; background: #fddb80; border: 1px solid #000; }
.layername { margin-left: 4px; color: #000; font-size: 12px; }
.chev { width: 8px; height: 6px; margin-left: auto; margin-right: 4px; }
.belowcombo { flex: 1; border-left: 1px solid #888; margin-left: 1px; margin-bottom: 3px; }
.sep { width: 1px; height: 32px; background: #777; margin: 0 -1px; }

/* workspace */
.workspace { height: 533px; margin: 4px 0 0 4px; display: flex; align-items: stretch; }
.vtool {
  width: 41px; border: 1px solid #bbb; background: #f5f5f5;
  display: flex; flex-direction: column; align-items: flex-start; gap: 6px; overflow: hidden; padding: 1px 0 0 3px;
}
.grip-h { width: 13px; height: 3px; margin: 0 0 1px 6px; background: repeating-linear-gradient(90deg, #777 0 1px, transparent 1px 2px); }
.center { width: 829px; margin-left: 4px; display: flex; flex-direction: column; }
.center-top { display: flex; height: 516px; }
.canvas { width: 808px; height: 516px; }
.vscroll {
  width: 16px; background: #f6f6f6; display: flex; flex-direction: column; align-items: center; padding: 7px 0 6px;
}
.sc-a { width: 10px; height: 6px; }
.sc-thumb { width: 15px; height: 17px; background: #ccc; margin-top: 106px; margin-bottom: auto; }
.hscroll { height: 17px; width: 808px; background: #f6f6f6; display: flex; align-items: center; padding-left: 5px; }
.sc-h { width: 6px; height: 10px; }
.sc-hthumb { width: 17px; height: 17px; background: #ccc; margin-left: auto; margin-right: 6px; }
.hscroll .sc-h:last-child { margin-right: 5px; }

/* canvas drawing */
.ctr path { fill: none; stroke: #cc58cc; stroke-width: 1.1; stroke-dasharray: 33 1.500 1 1.500; }
.ctr .ctr-h { stroke: #d85cd8; stroke-width: 2; }
.circles circle { fill: none; stroke: #fff; stroke-width: 3; }
.dim path { fill: none; stroke: #e6e600; stroke-width: 1.2; }
.arrow path { fill: #ff0; }
.dimtext text { font: 30px "Liberation Sans", sans-serif; fill: #ff0; }
.ucs path { fill: none; stroke: #e8e8e8; stroke-width: 1.300; }
.ring { fill: none; stroke: #2f2f2f; stroke-width: 10; }
.face { fill: #8c8c8c; stroke: #a6a6a6; }
.face2 { fill: #808080; }
.cube-top { font-size: 18px; fill: #444; text-anchor: middle; }
.cube-l { font-size: 14px; fill: #a0a0a0; text-anchor: middle; }
.wcs { fill: #85858f; stroke: #55555c; }
.wcs-t { font: 11px "Liberation Sans", sans-serif; fill: #555; }
.wcs-c { fill: none; stroke: #a0a0a8; }
.nav-bg { fill: #454545; }
.nav-f { fill: #2e2e2e; }
.nav { fill: none; stroke: #2a2a2a; stroke-width: 1.2; }
.nav-fl { fill: #2a2a2a; }
.nav-ln { stroke: #555; fill: none; }
.nav-th { stroke: #2a2a2a; stroke-width: 2.5; fill: none; }

/* command line */
.command { height: 58px; margin: 3px 4px 0; display: flex; background: #d6d6d6; }
.cmd-side { width: 25px; display: flex; flex-direction: column; align-items: center; padding-top: 4px; }
.cmd-grip { width: 17px; height: 5px; background: repeating-linear-gradient(90deg, #666 0 1px, transparent 1px 2px); }
.cmd-x { width: 10px; height: 10px; margin-top: 7px; }
.cmd-w { width: 16px; height: 16px; margin-top: 9px; }
.cmd-main { flex: 1; display: flex; flex-direction: column; margin-right: 1px; }
.history { height: 38px; background: #c6c6c6; border-bottom: 1px solid #aaa; color: #111; padding: 5px 0 0 2px; line-height: 14px; font-size: 13px; }
.h1 { height: 14px; white-space: nowrap; }
.h2 { height: 14px; }
.mono { font-family: "DejaVu Sans Mono", monospace; font-size: 11.620px; margin-left: 4px; }
.cmdline { height: 20px; background: #fff; display: flex; align-items: center; padding-left: 4px; }
.prompt { width: 16px; height: 11px; }
.prompt-c { width: 8px; height: 5px; margin-left: 2px; }
.placeholder { margin-left: 7px; font-style: italic; color: #8c8c8c; font-size: 12px; }

/* bottom */
.bottom { height: 48px; margin: 1px 4px 0; background: #d6d6d6; display: flex; flex-direction: column; }
.ltabs { height: 21px; display: flex; gap: 4px; padding-left: 11px; }
.lt { width: 50px; height: 18px; background: #e2e2e2; border-radius: 0 0 8px 8px; text-align: center; line-height: 18px; color: #777; font-size: 12px; }
.lt-on { width: 45px; background: #f0f0f0; color: #222; font-weight: 500; }
.lt-plus { width: 18px; margin-left: 5px; font-weight: 700; }
.status { height: 25px; display: flex; gap: 2px; padding-left: 349px; position: relative; }
.sg { background: #ececec; display: flex; align-items: center; gap: 5px; padding: 0 3px; height: 25px; }
.s { width: 16px; height: 16px; }
.sc { width: 8px; height: 5px; }
.w1 { width: 28px; padding: 0; justify-content: center; }
.model { color: #222; font-size: 12px; }
.w2 { width: 64px; padding-left: 5px; gap: 8px; }
.w3 { width: 100px; padding-left: 1px; gap: 8px; }
.w4 { width: 63px; padding-left: 2px; gap: 2px; }
.w5 { width: 108px; padding-left: 3px; gap: 6px; }
.w6 { width: 40px; }
.w7 { width: 22px; }
.w8 { width: 24px; }
.w9 { width: 52px; }
.w10 { width: 46px; justify-content: flex-end; }
.on { width: 22px; height: 22px; background: #cce4f7; border: 1px solid #2f6aa0; display: flex; align-items: center; justify-content: center; }
.scale { font: 12px "Liberation Sans", sans-serif; color: #444; margin-left: 3px; margin-right: -1px; }
.watermark {
  position: absolute; left: 716px; top: -2px; font-size: 20px; line-height: 27px; white-space: nowrap;
  color: rgba(110, 110, 110, .6);
}
```
